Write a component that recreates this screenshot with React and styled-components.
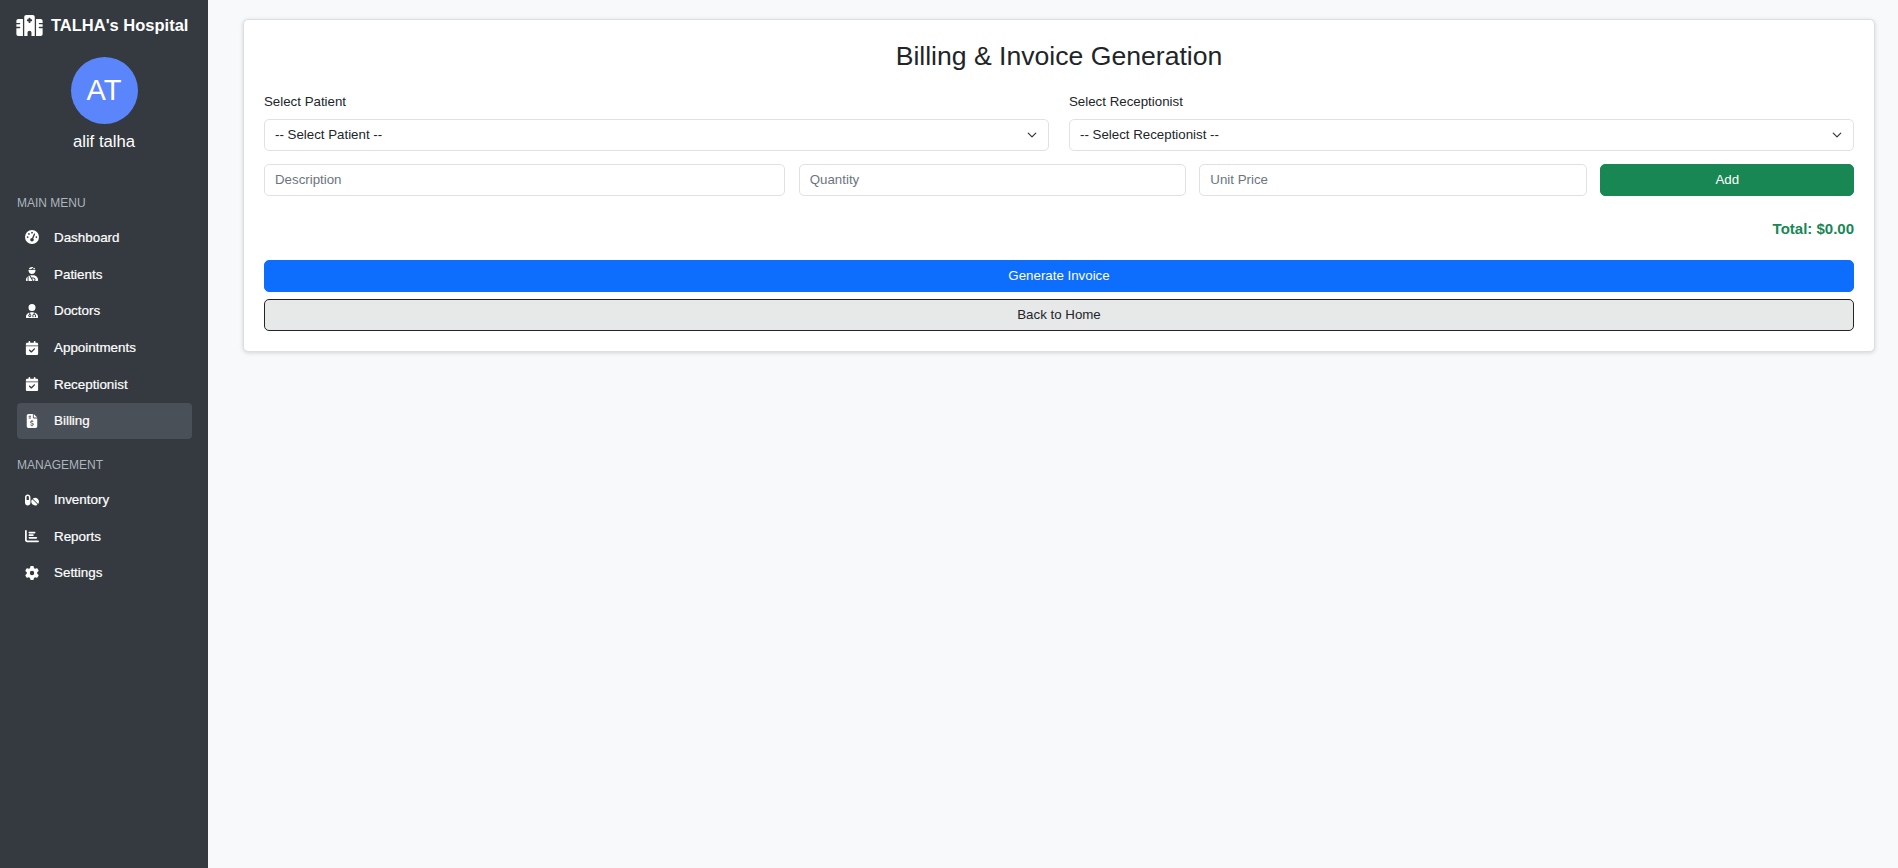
import styled, { createGlobalStyle } from 'styled-components'
import {
  FaHospital,
  FaGaugeHigh,
  FaUserInjured,
  FaUserDoctor,
  FaCalendarCheck,
  FaFileInvoiceDollar,
  FaPills,
  FaChartBar,
  FaGear,
} from 'react-icons/fa6'

const Global = createGlobalStyle`
  * { box-sizing: border-box; }
  body {
    margin: 0;
    background: #f8f9fa;
    color: #212529;
    font-family: "Liberation Sans", Arial, sans-serif;
    font-size: 13.3px;
  }
`

const Layout = styled.div`
  display: flex;
  min-height: 868px;
`

const Sidebar = styled.aside`
  width: 208px;
  flex-shrink: 0;
  background: #343a40;
  color: #fff;
  padding: 0 16px;
`

const Brand = styled.div`
  display: flex;
  align-items: center;
  gap: 8px;
  height: 51px;
  font-size: 16.5px;
  font-weight: 700;
  white-space: nowrap;
  svg { height: 21px; width: 27px; flex-shrink: 0; }
`

const Profile = styled.div`
  display: flex;
  flex-direction: column;
  align-items: center;
  margin-top: 6px;
`

const Avatar = styled.div`
  width: 67px;
  height: 67px;
  border-radius: 50%;
  background: #5b86fb;
  display: flex;
  align-items: center;
  justify-content: center;
  font-size: 29px;
`

const UserName = styled.div`
  margin-top: 9px;
  font-size: 16.7px;
  line-height: 18px;
`

const SectionTitle = styled.div`
  margin: ${(p) => p.$top}px 0 9.6px 1px;
  font-size: 12px;
  line-height: 14px;
  color: #adb5bd;
  text-transform: uppercase;
`

const Menu = styled.nav`
  display: flex;
  flex-direction: column;
  margin-left: 1px;
`

const MenuItem = styled.a`
  display: flex;
  align-items: center;
  height: 36.7px;
  padding-left: 8px;
  border-radius: 4px;
  font-size: 13.4px;
  font-weight: 500;
  -webkit-text-stroke: 0.2px #fff;
  background: ${(p) => (p.$active ? '#495057' : 'transparent')};
  color: #fff;
`

const IconSlot = styled.span`
  display: flex;
  align-items: center;
  width: 29px;
  flex-shrink: 0;
  svg { height: 14px; width: auto; }
`

const Main = styled.main`
  flex: 1;
  padding: 19px 23px 0 35px;
`

const Card = styled.section`
  background: #fff;
  border: 1px solid #dcdee0;
  border-radius: 5px;
  box-shadow: 0 1px 4px rgba(0, 0, 0, 0.15);
  padding: 18px 20px 20px;
`

const Title = styled.h1`
  margin: 0 0 20px;
  text-align: center;
  font-size: 26.6px;
  font-weight: 400;
  line-height: 36px;
`

const SelectRow = styled.div`
  display: grid;
  grid-template-columns: 1fr 1fr;
  gap: 20px;
`

const Field = styled.label`
  display: block;
`

const FieldLabel = styled.span`
  display: block;
  line-height: 16px;
  margin-bottom: 9px;
`

const Select = styled.select`
  display: block;
  width: 100%;
  height: 32px;
  padding: 0 30px 1px 10px;
  appearance: none;
  background: #fff url("data:image/svg+xml,%3csvg xmlns='http://www.w3.org/2000/svg' viewBox='0 0 16 16'%3e%3cpath fill='none' stroke='%23343a40' stroke-linecap='round' stroke-linejoin='round' stroke-width='2' d='m2 5 6 6 6-6'/%3e%3c/svg%3e") no-repeat right 10px center / 12px 10px;
  border: 1px solid #dee2e6;
  border-radius: 5px;
  color: #212529;
  font-family: inherit;
  font-size: 13.3px;
`

const ItemRow = styled.div`
  display: grid;
  grid-template-columns: 521.4fr 387.3fr 387.8fr 253.5fr;
  gap: 13.3px;
  margin-top: 13px;
`

const Input = styled.input`
  height: 32px;
  min-width: 0;
  padding: 0 10px 1px;
  border: 1px solid #dee2e6;
  border-radius: 5px;
  font-family: inherit;
  font-size: 13.3px;
  &::placeholder { color: #6c757d; opacity: 1; }
`

const Button = styled.button`
  display: block;
  width: 100%;
  height: 32px;
  padding: 0 0 1px;
  border: 1px solid ${(p) => p.$border};
  border-radius: 5px;
  background: ${(p) => p.$bg};
  color: ${(p) => p.$color};
  font-family: inherit;
  font-size: 13.3px;
  margin-top: ${(p) => p.$top || 0}px;
`

const Total = styled.div`
  margin-top: 24px;
  text-align: right;
  color: #198754;
  font-size: 15px;
  font-weight: 700;
  line-height: 17px;
`

const mainMenu = [
  { label: 'Dashboard', icon: FaGaugeHigh },
  { label: 'Patients', icon: FaUserInjured },
  { label: 'Doctors', icon: FaUserDoctor },
  { label: 'Appointments', icon: FaCalendarCheck },
  { label: 'Receptionist', icon: FaCalendarCheck },
  { label: 'Billing', icon: FaFileInvoiceDollar, active: true },
]

const managementMenu = [
  { label: 'Inventory', icon: FaPills },
  { label: 'Reports', icon: FaChartBar },
  { label: 'Settings', icon: FaGear },
]

const renderItems = (items) =>
  items.map(({ label, icon: Icon, active }) => (
    <MenuItem key={label} $active={active}>
      <IconSlot><Icon /></IconSlot>
      {label}
    </MenuItem>
  ))

const App = () => {
  return (
    <Layout>
      <Global />
      <Sidebar>
        <Brand>
          <FaHospital />
          TALHA's Hospital
        </Brand>
        <Profile>
          <Avatar>AT</Avatar>
          <UserName>alif talha</UserName>
        </Profile>
        <SectionTitle $top={44.5}>Main Menu</SectionTitle>
        <Menu>{renderItems(mainMenu)}</Menu>
        <SectionTitle $top={18.4}>Management</SectionTitle>
        <Menu>{renderItems(managementMenu)}</Menu>
      </Sidebar>
      <Main>
        <Card>
          <Title>Billing &amp; Invoice Generation</Title>
          <SelectRow>
            <Field>
              <FieldLabel>Select Patient</FieldLabel>
              <Select defaultValue="">
                <option value="">-- Select Patient --</option>
              </Select>
            </Field>
            <Field>
              <FieldLabel>Select Receptionist</FieldLabel>
              <Select defaultValue="">
                <option value="">-- Select Receptionist --</option>
              </Select>
            </Field>
          </SelectRow>
          <ItemRow>
            <Input placeholder="Description" />
            <Input placeholder="Quantity" />
            <Input placeholder="Unit Price" />
            <Button $bg="#198754" $border="#198754" $color="#fff">Add</Button>
          </ItemRow>
          <Total>Total: $0.00</Total>
          <Button $bg="#0d6efd" $border="#0d6efd" $color="#fff" $top={23}>Generate Invoice</Button>
          <Button $bg="#e7e9e8" $border="#212529" $color="#212529" $top={7}>Back to Home</Button>
        </Card>
      </Main>
    </Layout>
  )
}

export default App
